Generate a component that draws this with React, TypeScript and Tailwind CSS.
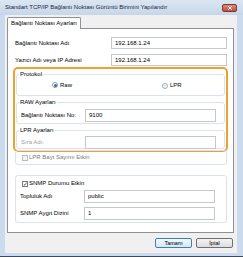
import { X } from 'lucide-react';

const font = { fontFamily: '"Liberation Sans", Arial, sans-serif' };

function Field({ label, value, disabled }: { label: string; value: string; disabled?: boolean }) {
  return (
    <div className="flex items-center h-[13px]">
      <span className={`w-[68px] shrink-0 pl-[4px] ${disabled ? 'text-[#a0a0a0]' : 'text-black'}`}>{label}</span>
      <div className="w-[131px] h-[13px] border border-[#c4c7cc] bg-white flex items-center pl-[3px]">{value}</div>
    </div>
  );
}

function Group({ legend, children, className }: { legend?: string; children: React.ReactNode; className?: string }) {
  return (
    <fieldset className={`border border-[#dbe2e8] rounded-[3px] ${className ?? ''}`}>
      {legend && <legend className="ml-[2px] px-[1px] leading-[7px]">{legend}</legend>}
      {children}
    </fieldset>
  );
}

export default function App() {
  return (
    <div className="w-[243px] h-[257px] bg-[#cbdaec] flex flex-col text-[6px] text-black border-b border-[#3c4a5c]" style={font}>
      {/* title bar */}
      <div className="h-[15px] shrink-0 flex items-center justify-between pl-[5px] pr-[6px] bg-gradient-to-b from-[#dbe6f3] to-[#c6d6ea]">
        <span className="text-[6px] text-[#1c2838]">Standart TCP/IP Bağlantı Noktası Görüntü Birimini Yapılandır</span>
        <div className="w-[15px] h-[8px] mt-[1px] rounded-[2px] border border-[#7a3a34] bg-gradient-to-b from-[#e08a7c] to-[#c24b3c] flex items-center justify-center">
          <X className="w-[6px] h-[6px] text-white" strokeWidth={4} />
        </div>
      </div>

      {/* body */}
      <div className="flex-1 mx-[5px] mr-[6px] mb-[3px] bg-[#f0f0f0] flex flex-col pl-[2px] pr-[3px] pt-[2px]">
        <div className="flex">
          <div className="h-[12px] px-[3px] bg-white border border-b-0 border-[#8e9197] rounded-t-[2px] flex items-center -mb-px relative z-10">
            Bağlantı Noktası Ayarları
          </div>
        </div>
        <div className="h-[205px] bg-white border border-[#8e9197] pt-[8px] pl-[7px] pr-[5px] flex flex-col">
          <div className="flex flex-col gap-[5px] pr-[1px]">
            <div className="flex items-center h-[12px]">
              <span className="w-[96px] shrink-0">Bağlantı Noktası Adı</span>
              <div className="flex-1 h-[12px] border border-[#c4c7cc] flex items-center pl-[3px]">192.168.1.24</div>
            </div>
            <div className="flex items-center h-[12px]">
              <span className="w-[96px] shrink-0">Yazıcı Adı veya IP Adresi</span>
              <div className="flex-1 h-[12px] border border-[#c4c7cc] flex items-center pl-[3px]">192.168.1.24</div>
            </div>
          </div>

          {/* highlight */}
          <div className="mt-[1px] -ml-[2px] border-2 border-[#f0a030] rounded-[5px] pt-[2px] pb-[1px] px-px flex flex-col gap-[3px]">
            <Group legend="Protokol" className="h-[25px]">
              <div className="flex items-center h-[14px] pl-[35px]">
                <div className="flex items-center gap-[2px] w-[110px]">
                  <span className="w-[6px] h-[6px] rounded-full border border-[#8a9aa8] bg-white flex items-center justify-center">
                    <span className="w-[3px] h-[3px] rounded-full bg-[#2c6fae]" />
                  </span>
                  Raw
                </div>
                <div className="flex items-center gap-[2px] mt-[1px]">
                  <span className="w-[6px] h-[6px] rounded-full border border-[#a8b2bc] bg-[#eef0f2]" />
                  LPR
                </div>
              </div>
            </Group>
            <Group legend="RAW Ayarları" className="h-[25px]">
              <div className="pt-[3px]">
                <Field label="Bağlantı Noktası No:" value="9100" />
              </div>
            </Group>
            <Group legend="LPR Ayarları" className="h-[22px]">
              <div className="pt-[2px]">
                <Field label="Sıra Adı:" value="" disabled />
              </div>
            </Group>
          </div>

          <Group className="-mt-[2px] ml-0 h-[15px] mr-px">
            <div className="flex items-center gap-[1px] pl-[6px] h-[13px] text-[#7a7a7a]">
              <span className="w-[6px] h-[6px] border border-[#b6bcc2] bg-[#f4f4f4]" />
              LPR Bayt Sayımı Etkin
            </div>
          </Group>

          <Group className="mt-[10px] h-[48px] mr-px">
            <div className="flex flex-col pt-[3px]">
              <div className="flex items-center gap-[1px] pl-[6px] h-[9px]">
                <span className="w-[6px] h-[6px] border border-[#707880] bg-white flex items-center justify-center text-[6px] leading-none text-[#1c3c6a]">✓</span>
                SNMP Durumu Etkin
              </div>
              <div className="flex flex-col gap-[4px] mt-[2px]">
                <Field label="Topluluk Adı" value="public" />
                <Field label="SNMP Aygıt Dizini" value="1" />
              </div>
            </div>
          </Group>
        </div>

        <div className="flex justify-end gap-[4px] mt-[5px] pr-px">
          <button className="w-[37px] h-[10px] rounded-[2px] border border-[#3c7fb1] bg-gradient-to-b from-[#f2f8fc] to-[#d6e8f5] text-[5.5px] flex items-center justify-center">Tamam</button>
          <button className="w-[37px] h-[10px] rounded-[2px] border border-[#707070] bg-gradient-to-b from-[#f4f4f4] to-[#dcdcdc] text-[5.5px] flex items-center justify-center">İptal</button>
        </div>
      </div>
    </div>
  );
}
